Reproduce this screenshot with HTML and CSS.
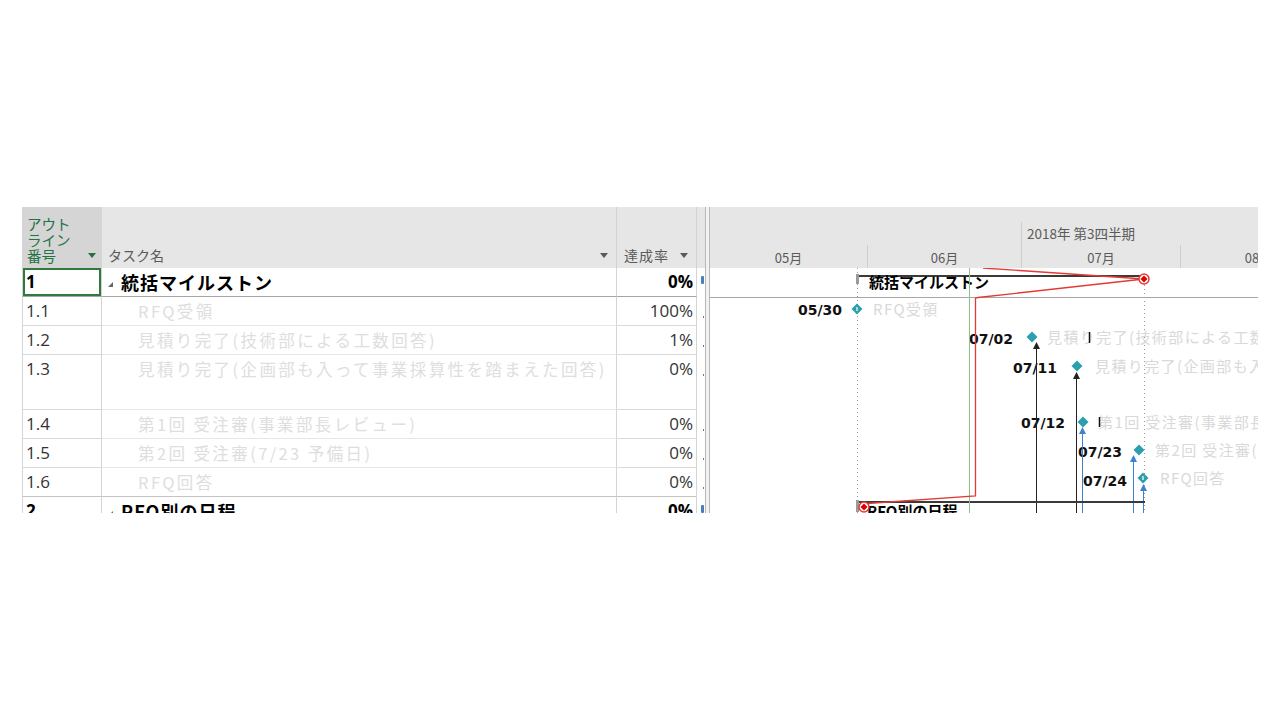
FILE: index.html
```html
<!DOCTYPE html>
<html lang="ja">
<head>
    <meta charset="UTF-8">
    <meta name="viewport" content="width=device-width, initial-scale=1.0">
    <title>ガントチャート</title>
    <link rel="stylesheet" href="styles.css">
</head>
<body>
    <div class="view">
        <div class="sheet">
            <div class="sheet-head">
                <div class="hcell outline-head">
                    <span>アウト<br>ライン<br>番号</span><i class="drop green"></i>
                </div>
                <div class="hcell name-head"><span>タスク名</span><i class="drop"></i></div>
                <div class="hcell pct-head"><span>達成率</span><i class="drop"></i></div>
                <div class="hcell ind-head"></div>
            </div>

            <div class="row summary selected">
                <div class="cell num">1</div>
                <div class="cell name"><i class="caret"></i>統括マイルストン</div>
                <div class="cell pct">0%</div>
                <div class="cell ind"><b class="flag"></b></div>
            </div>
            <div class="row">
                <div class="cell num">1.1</div>
                <div class="cell name">RFQ受領</div>
                <div class="cell pct">100%</div>
                <div class="cell ind"><b class="dot"></b></div>
            </div>
            <div class="row">
                <div class="cell num">1.2</div>
                <div class="cell name">見積り完了(技術部による工数回答)</div>
                <div class="cell pct">1%</div>
                <div class="cell ind"><b class="dot"></b></div>
            </div>
            <div class="row tall">
                <div class="cell num">1.3</div>
                <div class="cell name">見積り完了(企画部も入って事業採算性を踏まえた回答)</div>
                <div class="cell pct">0%</div>
                <div class="cell ind"><b class="dot"></b></div>
            </div>
            <div class="row">
                <div class="cell num">1.4</div>
                <div class="cell name">第1回 受注審(事業部長レビュー)</div>
                <div class="cell pct">0%</div>
                <div class="cell ind"><b class="dot"></b></div>
            </div>
            <div class="row">
                <div class="cell num">1.5</div>
                <div class="cell name">第2回 受注審(7/23 予備日)</div>
                <div class="cell pct">0%</div>
                <div class="cell ind"><b class="dot"></b></div>
            </div>
            <div class="row last-child">
                <div class="cell num">1.6</div>
                <div class="cell name">RFQ回答</div>
                <div class="cell pct">0%</div>
                <div class="cell ind"><b class="dot"></b></div>
            </div>
            <div class="row summary">
                <div class="cell num">2</div>
                <div class="cell name"><i class="caret"></i>RFQ別の日程</div>
                <div class="cell pct">0%</div>
                <div class="cell ind"><b class="flag"></b></div>
            </div>
        </div>

        <div class="splitter"></div>

        <div class="gantt">
            <div class="timescale">
                <div class="tier tier-top">
                    <div class="q2"></div>
                    <div class="q3">2018年 第3四半期</div>
                </div>
                <div class="tier tier-months">
                    <div class="m05">05月</div>
                    <div class="m06">06月</div>
                    <div class="m07">07月</div>
                    <div class="m08">08月</div>
                </div>
            </div>

            <svg class="chart" width="548" height="260" viewBox="0 0 548 260">
                <defs>
                    <path id="dm" d="M0 -5.5 L5.5 0 L0 5.5 L-5.5 0 Z"/>
                </defs>

                <line class="sum-line" x1="0" y1="29.5" x2="548" y2="29.5"/>
                <line class="dotted" x1="147.5" y1="0" x2="147.5" y2="260"/>
                <line class="dotted" x1="434.5" y1="17" x2="434.5" y2="260"/>

                <!-- 統括マイルストン -->
                <line class="bar" x1="147" y1="8" x2="434" y2="8"/>
                <rect class="cap" x="146" y="6" width="3" height="10"/>
                <text class="bar-label" x="159" y="20">統括マイルストン</text>

                <!-- milestones -->
                <text class="date" x="132" y="47" text-anchor="end">05/30</text>
                <use class="ms" href="#dm" x="147" y="41"/>
                <rect class="done" x="146.4" y="39" width="1.2" height="4"/>
                <text class="label" x="163" y="47">RFQ受領</text>

                <text class="date" x="303" y="76" text-anchor="end">07/02</text>
                <use class="ms" href="#dm" x="322" y="69"/>
                <text class="label" x="337" y="75">見積り完了(技術部による工数回答)</text>

                <text class="date" x="347" y="105" text-anchor="end">07/11</text>
                <use class="ms" href="#dm" x="367" y="98"/>
                <text class="label" x="385" y="104">見積り完了(企画部も入って事業採算性を踏まえた回答)</text>

                <text class="date" x="355" y="160" text-anchor="end">07/12</text>
                <use class="ms" href="#dm" x="373" y="154"/>
                <text class="label" x="388" y="160">第1回 受注審(事業部長レビュー)</text>

                <text class="date" x="412" y="189" text-anchor="end">07/23</text>
                <use class="ms" href="#dm" x="429" y="182"/>
                <text class="label" x="445" y="188">第2回 受注審(7/23 予備日)</text>

                <text class="date" x="417" y="218" text-anchor="end">07/24</text>
                <use class="ms" href="#dm" x="433" y="210"/>
                <rect class="done" x="432.4" y="208" width="1.2" height="4"/>
                <text class="label" x="450" y="216">RFQ回答</text>

                <!-- overlap marks -->
                <line class="glitch" x1="379.5" y1="64" x2="379.5" y2="75"/>
                <line class="glitch" x1="389.5" y1="149" x2="389.5" y2="159"/>

                <!-- links -->
                <line class="link" x1="326.5" y1="80" x2="326.5" y2="260"/>
                <path class="head" d="M326.5 74 l3.5 7 h-7 Z"/>
                <line class="link" x1="366.5" y1="110" x2="366.5" y2="260"/>
                <path class="head" d="M366.5 104 l3.5 7 h-7 Z"/>
                <line class="link-b" x1="372.5" y1="165" x2="372.5" y2="260"/>
                <path class="head-b" d="M372.5 159 l3.5 7 h-7 Z"/>
                <line class="link-b" x1="423.5" y1="193" x2="423.5" y2="260"/>
                <path class="head-b" d="M423.5 187 l3.5 7 h-7 Z"/>
                <line class="link-b" x1="433.5" y1="222" x2="433.5" y2="260"/>
                <path class="head-b" d="M433.5 216 l3.5 7 h-7 Z"/>

                <!-- RFQ別の日程 -->
                <line class="bar" x1="147" y1="234" x2="435" y2="234"/>
                <rect class="cap" x="146" y="232" width="3" height="12"/>
                <text class="bar-label" x="157" y="249">RFQ別の日程</text>

                <!-- status line and deadline path -->
                <line class="status" x1="259.5" y1="0" x2="259.5" y2="260"/>
                <polyline class="late" points="273,0 434,11 268,29.5 265.5,30 265.5,228 150,236"/>
                <g class="deadline">
                    <circle cx="434" cy="11" r="5"/>
                    <path d="M434 7.5 L437.5 11 L434 14.5 L430.5 11 Z"/>
                    <circle cx="154" cy="239" r="5"/>
                    <path d="M154 235.5 L157.5 239 L154 242.5 L150.5 239 Z"/>
                </g>
            </svg>
        </div>
    </div>
</body>
</html>
```

FILE: styles.css
```css
* {
    box-sizing: border-box;
}
body {
    margin: 0;
    background: #fff;
    font-family: "Open Sans", "Noto Sans CJK JP", sans-serif;
}
.view {
    display: flex;
    width: 1236px;
    height: 306px;
    margin: 207px 0 0 22px;
    overflow: hidden;
}

/* left sheet */
.sheet {
    width: 683px;
    flex: none;
}
.sheet-head {
    display: flex;
    height: 61px;
    background: #e6e6e6;
}
.hcell {
    display: flex;
    align-items: flex-end;
    justify-content: space-between;
    padding: 0 8px 3px 6px;
    color: #5a5a5a;
    font-family: "Noto Sans CJK JP", sans-serif;
    font-size: 14px;
    line-height: 20px;
}
.outline-head {
    width: 80px;
    background: #d5d5d5;
    color: #217346;
    font-size: 14.5px;
    line-height: 16px;
    padding: 0 6px 4px 5px;
}
.name-head {
    width: 515px;
    border-right: 1px solid #d2d2d2;
}
.pct-head {
    width: 80px;
    padding-left: 7px;
    border-right: 1px solid #d2d2d2;
    letter-spacing: 1px;
}
.ind-head {
    width: 8px;
    padding: 0;
}
.drop {
    display: block;
    width: 0;
    height: 0;
    margin-bottom: 7px;
    border-left: 4.5px solid transparent;
    border-right: 4.5px solid transparent;
    border-top: 5px solid #5a5a5a;
}
.drop.green {
    border-top-color: #217346;
    margin-bottom: 6px;
}

.row {
    display: flex;
    height: 29px;
}
.row.tall {
    height: 55px;
}
.cell {
    height: 100%;
    border-bottom: 1px solid #dadada;
    border-right: 1px solid #d4d4d4;
    line-height: 28px;
    white-space: nowrap;
    overflow: hidden;
}
.num {
    width: 80px;
    padding-left: 3px;
    border-left: 1px solid #d4d4d4;
    font-size: 17px;
    color: #333;
}
.name {
    width: 515px;
    padding-left: 36px;
    border-bottom-color: #e6e6e6;
    font-family: "Noto Sans CJK JP", sans-serif;
    font-size: 16.5px;
    letter-spacing: 2.4px;
    color: #dedede;
}
.pct {
    width: 80px;
    padding-right: 3px;
    text-align: right;
    font-size: 17px;
    color: #333;
}
.ind {
    width: 8px;
    border-right: none;
    border-bottom: none;
}
.dot {
    display: block;
    width: 1px;
    height: 2px;
    margin: 19px 0 0 6px;
    background: #777;
}
.flag {
    display: block;
    width: 3px;
    height: 8px;
    margin: 8px 0 0 4px;
    border-radius: 1px;
    background: #4a7ebb;
}

.summary .cell {
    font-weight: 700;
    color: #000;
    border-bottom-color: #a6a6a6;
}
.summary .name {
    padding-left: 6px;
    font-size: 18px;
    letter-spacing: 1px;
}
.summary .ind {
    border-bottom: none;
}
.last-child .cell {
    border-bottom-color: #c4c4c4;
}
.selected .num {
    box-shadow: inset 0 0 0 2px #2f7a3c;
}
.caret {
    display: inline-block;
    width: 0;
    height: 0;
    margin: 0 8px 0 0;
    vertical-align: 3px;
    border-left: 5px solid transparent;
    border-bottom: 5px solid #666;
}

/* splitter */
.splitter {
    width: 5px;
    flex: none;
    border-left: 1px solid #b8b8b8;
    border-right: 1px solid #b8b8b8;
    background: #f2f2f2;
}

/* gantt */
.gantt {
    flex: 1;
    min-width: 0;
    display: flex;
    flex-direction: column;
    overflow: hidden;
}
.timescale {
    height: 61px;
    flex: none;
    display: flex;
    flex-direction: column;
    justify-content: flex-end;
    background: #e6e6e6;
    color: #5a5a5a;
    font-family: "Noto Sans CJK JP", sans-serif;
    font-size: 13px;
}
.tier {
    display: flex;
    height: 23px;
}
.q2 {
    width: 311px;
    flex: none;
}
.q3 {
    flex: 1;
    padding-left: 5px;
    border-left: 1px solid #cfcfcf;
    font-size: 13.5px;
    line-height: 23px;
    white-space: nowrap;
}
.tier-months div {
    flex: none;
    padding-top: 2px;
    line-height: 21px;
    text-align: center;
    white-space: nowrap;
}
.tier-months div + div {
    border-left: 1px solid #cfcfcf;
}
.m05 {
    width: 157px;
}
.m06 {
    width: 154px;
}
.m07 {
    width: 159px;
}
.m08 {
    width: 156px;
}
.chart {
    display: block;
    flex: none;
}

.sum-line {
    stroke: #a6a6a6;
}
.dotted {
    stroke: #9a9a9a;
    stroke-dasharray: 1 3;
}
.bar {
    stroke: #3a3a3a;
    stroke-width: 2;
}
.cap {
    fill: #9a9a9a;
}
.bar-label {
    font-family: "Noto Sans CJK JP", sans-serif;
    font-size: 15px;
    font-weight: 700;
    fill: #000;
}
.date {
    font-family: "DejaVu Sans", sans-serif;
    font-size: 14px;
    font-weight: 700;
    fill: #111;
}
.label {
    font-family: "Noto Sans CJK JP", sans-serif;
    font-size: 15px;
    letter-spacing: 1.4px;
    fill: #d9d9d9;
}
.ms {
    fill: #2b9fab;
}
.done {
    fill: #fff;
}
.glitch {
    stroke: #111;
    stroke-width: 1.5;
}
.link {
    stroke: #222;
}
.head {
    fill: #222;
}
.link-b {
    stroke: #3f80cf;
}
.head-b {
    fill: #3f80cf;
}
.status {
    stroke: #8cc08c;
}
.late {
    fill: none;
    stroke: #e23b36;
    stroke-width: 1.3;
}
.deadline circle {
    fill: #fff;
    stroke: #e23b36;
    stroke-width: 1.5;
}
.deadline path {
    fill: #e00000;
}
```
